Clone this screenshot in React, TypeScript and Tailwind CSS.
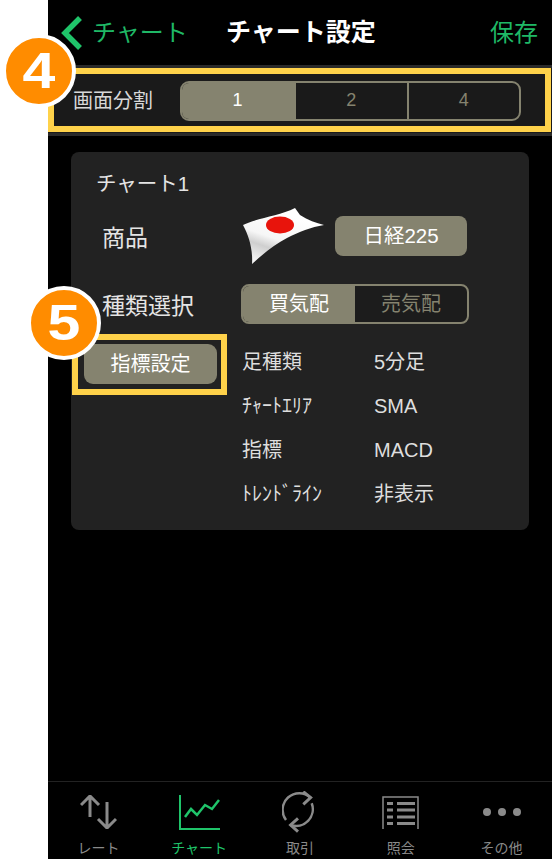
import React from 'react'

const jp = "font-['Liberation_Sans','Noto_Sans_CJK_JP',sans-serif]"

function Badge({ n, className }: { n: string; className: string }) {
  return (
    <div
      className={`absolute flex h-[74px] w-[74px] items-center justify-center rounded-full border-[4px] border-white bg-[#ff8c00] text-[50px] font-bold text-white ${className}`}
    >
      <span className="scale-x-[1.18]">{n}</span>
    </div>
  )
}

function FlagIcon() {
  return (
    <svg width="82" height="57" viewBox="0 0 82 57" className="block">
      <defs>
        <linearGradient id="flag" x1="0.1" y1="0.9" x2="0.5" y2="0.1">
          <stop offset="0" stopColor="#f4f4f4" />
          <stop offset="0.3" stopColor="#cfcfcf" />
          <stop offset="0.5" stopColor="#f6f6f6" />
          <stop offset="1" stopColor="#ffffff" />
        </linearGradient>
      </defs>
      <path d="M0 17 C14 10 36 8 52 0 L57 7 C65 12 73 15 81 17 C68 19 56 24 44 30 C32 36 20 46 9 56 C10 42 6 28 0 17Z" fill="url(#flag)" />
      <ellipse cx="37" cy="17" rx="14" ry="8.5" fill="#e8140c" />
    </svg>
  )
}

function BottomTab({ label, active, children }: { label: string; active?: boolean; children: React.ReactNode }) {
  return (
    <div className={`flex flex-1 flex-col items-center ${active ? 'text-[#1fc46a]' : 'text-[#8a8a8a]'}`}>
      <div className="flex h-[60px] items-center">{children}</div>
      <span className="-mt-[2px] text-[14px] leading-[16px]">{label}</span>
    </div>
  )
}

const specs = [
  ['足種類', '5分足'],
  ['ﾁｬｰﾄｴﾘｱ', 'SMA'],
  ['指標', 'MACD'],
  ['ﾄﾚﾝﾄﾞﾗｲﾝ', '非表示'],
]

export default function App() {
  return (
    <div className={`relative flex h-[859px] w-[552px] overflow-hidden bg-white ${jp}`}>
      <div className="ml-[48px] flex w-[504px] flex-col bg-black">
        {/* Nav bar */}
        <header className="flex h-[65px] items-center justify-between pr-[14px] pl-[12px]">
          <div className="flex items-center gap-[8px] text-[24px] text-[#1fb866]">
            <svg width="24" height="36" viewBox="0 0 24 36" fill="none" stroke="#1fc46a" strokeWidth="5.5">
              <path d="M20 3 L5 18 L20 33" />
            </svg>
            <span>チャート</span>
          </div>
          <h1 className="absolute left-[226px] text-[25px] font-bold text-white">チャート設定</h1>
          <span className="text-[24px] text-[#1fb866]">保存</span>
        </header>

        {/* Split selector */}
        <div className="relative flex h-[71px] items-center border-y-[3px] border-[#2a2a2a] bg-[#1a1a1a] pl-[25px]">
          <span className="w-[107px] text-[20px] text-[#d8d8d8]">画面分割</span>
          <div className="flex h-[40px] w-[341px] overflow-hidden rounded-[9px] border-2 border-[#85836f] text-[18px]">
            <div className="flex w-[114px] items-center justify-center bg-[#85836f] pr-[3px] text-white">1</div>
            <div className="flex flex-1 items-center justify-center border-r-2 border-[#85836f] text-[#85836f]">2</div>
            <div className="flex flex-1 items-center justify-center text-[#85836f]">4</div>
          </div>
        </div>

        {/* Chart card */}
        <div className="px-[23px] pt-[16px]">
          <section className="h-[378px] rounded-[8px] bg-[#222222] pt-[18px] pl-[25px] text-[#e4e4e4]">
            <h2 className="text-[20.5px] leading-[28px]">チャート1</h2>
            <div className="mt-[18px] flex items-center">
              <span className="w-[140px] pt-[4px] pl-[6px] text-[23px]">商品</span>
              <div className="-my-[9px] ml-[7px]">
                <FlagIcon />
              </div>
              <div className="ml-[10px] flex h-[40px] w-[132px] items-center justify-center rounded-[8px] bg-[#85836f] text-[20.5px] text-white">
                日経225
              </div>
            </div>
            <div className="mt-[28px] flex items-center">
              <span className="w-[145px] pt-[4px] pl-[6px] text-[23px]">種類選択</span>
              <div className="flex h-[40px] w-[228px] overflow-hidden rounded-[8px] border-2 border-[#85836f] bg-[#1c1c1c] text-[20px]">
                <div className="flex w-[112px] items-center justify-center bg-[#85836f] text-white">買気配</div>
                <div className="flex flex-1 items-center justify-center text-[#85836f]">売気配</div>
              </div>
            </div>
            <div className="mt-[20px] flex">
              <div className="relative ml-[-12px] h-[40px] w-[133px] shrink-0">
                <div className="flex h-full w-full items-center justify-center rounded-[9px] bg-[#85836f] text-[20px] text-white">
                  指標設定
                </div>
                <div className="absolute -top-[10px] -right-[10px] -bottom-[11px] -left-[12px] border-[6px] border-[#ffd24a]" />
              </div>
              <dl className="-mt-[4px] ml-[25px] grid flex-1 grid-cols-[132px_1fr] text-[20px] leading-[44px] text-[#dedede]">
                {specs.map(([k, v]) => (
                  <React.Fragment key={k}>
                    <dt>{k}</dt>
                    <dd>{v}</dd>
                  </React.Fragment>
                ))}
              </dl>
            </div>
          </section>
        </div>

        {/* Tab bar */}
        <nav className="mt-auto flex h-[78px] border-t border-[#222222]">
          <BottomTab label="レート">
            <svg width="37" height="34" viewBox="0 0 37 34" fill="none" stroke="currentColor" strokeWidth="3">
              <path d="M10 22 V1 M1 10 L10 1 L19 10 M27 7 V33 M18 24 L27 33 L36 24" />
            </svg>
          </BottomTab>
          <BottomTab label="チャート" active>
            <svg width="41" height="35" viewBox="0 0 41 35" fill="none" stroke="currentColor" strokeWidth="2">
              <path d="M1 0 V34 H41" />
              <path strokeWidth="2.5" d="M6 22 L12 14 L18 20 L26 10 L33 14 L40 5" />
            </svg>
          </BottomTab>
          <BottomTab label="取引">
            <svg width="36" height="42" viewBox="0 0 36 42" fill="none" stroke="currentColor" strokeWidth="2.5">
              <path d="M4 29 A16.7 16.7 0 0 1 28.6 6.6 M29.7 12.3 A16.7 16.7 0 0 1 8.6 34" />
              <path d="M21.3 0.7 L28.6 6.6 L21.3 13.3 M16 27.3 L8.6 34 L16 40.7" strokeWidth="3" />
            </svg>
          </BottomTab>
          <BottomTab label="照会">
            <svg width="37" height="33" viewBox="0 0 37 33" fill="none" stroke="currentColor">
              <path strokeWidth="1.5" d="M1 33 V1 H36 V33" />
              <path strokeWidth="3" d="M5 7.5 H11 M15 7.5 H33 M5 14 H11 M15 14 H33 M5 21 H11 M15 21 H33 M5 27.5 H11 M15 27.5 H33" />
            </svg>
          </BottomTab>
          <BottomTab label="その他">
            <svg width="40" height="10" viewBox="0 0 40 10" fill="currentColor">
              <circle cx="5" cy="5" r="4" />
              <circle cx="20" cy="5" r="4" />
              <circle cx="35" cy="5" r="4" />
            </svg>
          </BottomTab>
        </nav>
      </div>

      {/* Callouts laid over the capture */}
      <div className="absolute top-[68px] left-[48px] h-[64px] w-[503px] border-[6px] border-[#ffd24a]" />
      <Badge n="4" className="top-[34px] left-[2px]" />
      <Badge n="5" className="top-[286px] left-[27px]" />
    </div>
  )
}
